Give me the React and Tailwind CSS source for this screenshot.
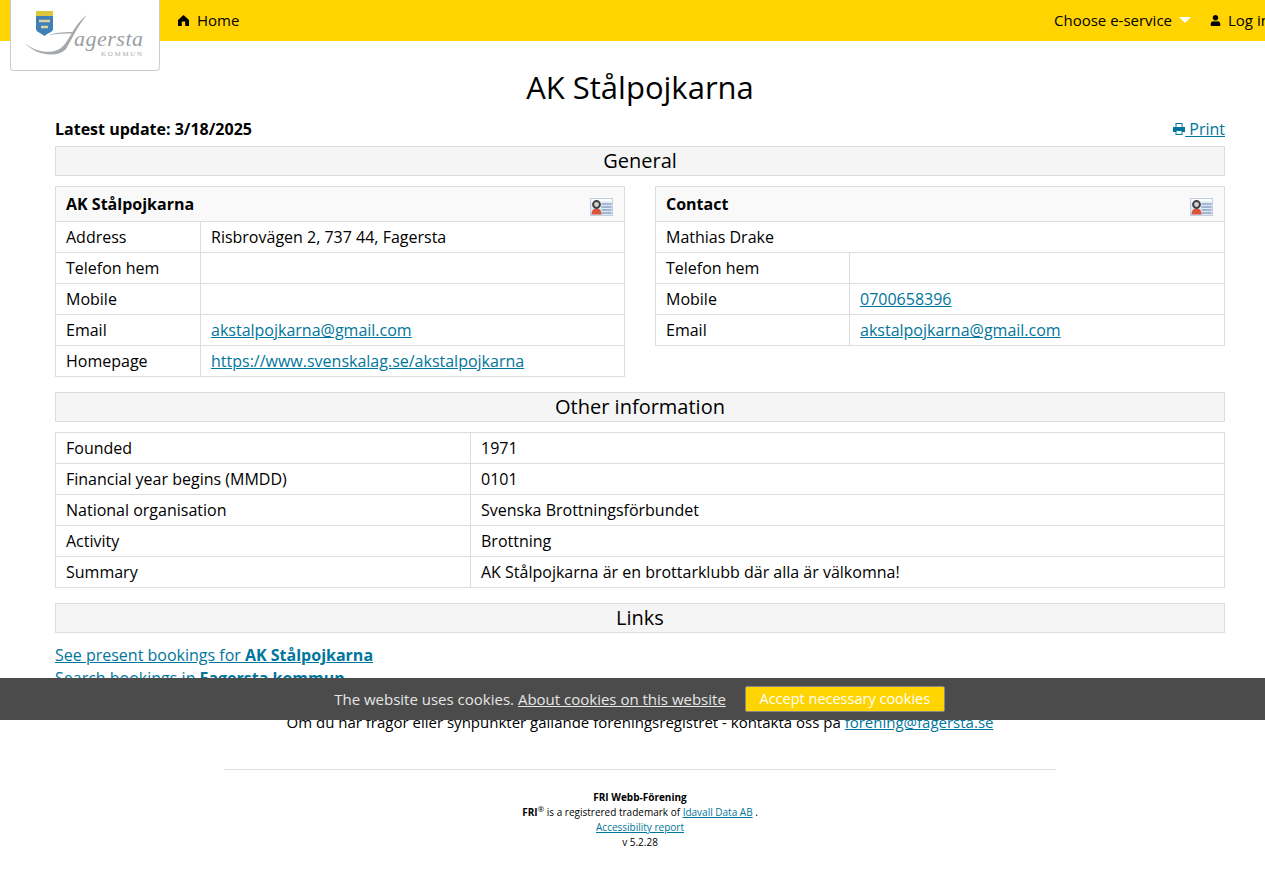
import React from "react";
import { FaUser } from "react-icons/fa";

const A = ({ children, className = "" }) => (
  <a href="#" className={"text-[#00769d] underline " + className}>{children}</a>
);

const CardIcon = () => (
  <svg width="23" height="18" viewBox="0 0 23 18" className="block">
    <rect x="0.5" y="0.5" width="22" height="17" fill="#dfe7f5" stroke="#c3cede" />
    <rect x="1" y="1" width="21" height="2.500" fill="#fbfcff" />
    <path d="M11.500 6h10M11.500 9h10M11.500 12h10M11.500 15h10" stroke="#8fa6c9" strokeWidth="1.500" />
    <path d="M1.500 16.500c0-4.500 2.500-6 5-6s5 1.500 5 6z" fill="#d9553a" />
    <circle cx="6.500" cy="6.500" r="3.400" fill="#d8d2ce" stroke="#3f3f3f" strokeWidth="2" />
  </svg>
);

const PrintIcon = () => (
  <svg width="12" height="12" viewBox="0 0 12 12" className="inline-block align-[0px]">
    <path fillRule="evenodd" d="M2.500 0H9.500V4H12V9H9.500V12H2.500V9H0V4H2.500zM3.500 1V4H8.500V1zM3.500 8V11H8.500V8z" fill="#00769d" />
  </svg>
);

const Section = ({ children }) => (
  <div className="h-[30px] border border-[#ddd] bg-[#f5f5f5] text-center text-[20px] leading-[28px]">{children}</div>
);

const Td = ({ children, className = "", ...p }) => (
  <td {...p} className={"h-[31px] border border-[#ddd] px-2.5 py-0 align-middle leading-[20px] " + className}>{children}</td>
);

const Head = ({ children }) => (
  <tr>
    <td colSpan={2} className="h-[35px] border border-[#ddd] bg-[#f9f9f9] pl-2.5 pr-[11px] align-middle">
      <div className="flex items-center justify-between font-bold">
        <span>{children}</span>
        <span className="mt-1.5"><CardIcon /></span>
      </div>
    </td>
  </tr>
);

export default function App() {
  return (
    <div className="relative h-[880px] w-full overflow-hidden bg-white text-[16px] text-black" style={{ fontFamily: '"Open Sans", sans-serif' }}>
      <nav className="flex h-[41px] w-[1285px] items-center justify-between bg-[#ffd400] pb-px pl-[178px] text-[15px]">
        <a href="#" className="flex items-center gap-2">
          <svg width="11" height="11" viewBox="0 0 11 11">
            <path d="M5.500 0 11 5V11H7.200V6.500H3.800V11H0V5z" fill="#000" />
          </svg>
          Home
        </a>
        <div className="flex items-center">
          <span>Choose e-service</span>
          <span className="ml-[7px] h-0 w-0 border-x-[6px] border-t-[6px] border-x-transparent border-t-white" />
          <FaUser className="ml-[19px] text-[11px]" />
          <span className="ml-[7px] w-[57px] whitespace-nowrap">Log in</span>
        </div>
      </nav>

      <div className="absolute left-[10px] top-0 h-[71px] w-[150px] rounded-b border border-t-0 border-[#ccc] bg-white">
        <svg width="148" height="70" viewBox="0 0 148 70" className="block">
          <path d="M25 11h17v5H25z" fill="#dcc63c" />
          <path d="M25 16h17v13c0 3-5 4-8.500 7-3.500-3-8.500-4-8.500-7z" fill="#3f80b8" />
          <path d="M28 21l11 0M30 27l7 0" stroke="#d9d3a0" strokeWidth="2.500" />
          <path d="M14 43c10 9 26 12 36 5 9-7 12-23 26-33-9 10-15 24-21 34-8 9-30 7-41-6z" fill="#a5a9ac" />
          <path d="M38 35c8-3 17-3 26-3l-1 1.500c-9 0-17 0-25 1.500z" fill="#a5a9ac" />
          <text x="63" y="46" fill="#9a9ea2" fontSize="22" fontStyle="italic" fontFamily="Liberation Serif, serif" textLength="69">agersta</text>
          <text x="90" y="56" fill="#a8acb0" fontSize="7" fontFamily="Liberation Serif, serif" textLength="41">KOMMUN</text>
        </svg>
      </div>

      <main className="pl-[55px] pr-[40px]">
        <h1 className="mt-[24px] h-[44px] text-center text-[31px] leading-[44px]">AK Stålpojkarna</h1>
        <div className="mt-[6px] flex h-[28px] items-center justify-between">
          <b>Latest update: 3/18/2025</b>
          <a href="#" className="whitespace-pre text-[#00769d] underline"><PrintIcon /> Print</a>
        </div>
        <div className="mt-[3px]"><Section>General</Section></div>

        <div className="mt-[10px] flex items-start gap-[30px]">
          <table className="w-[570px] table-fixed border-collapse">
            <colgroup><col className="w-[145px]" /><col /></colgroup>
            <tbody>
              <Head>AK Stålpojkarna</Head>
              <tr><Td>Address</Td><Td>Risbrovägen 2, 737 44, Fagersta</Td></tr>
              <tr><Td>Telefon hem</Td><Td /></tr>
              <tr><Td>Mobile</Td><Td /></tr>
              <tr><Td>Email</Td><Td><A>akstalpojkarna@gmail.com</A></Td></tr>
              <tr><Td>Homepage</Td><Td><A>https://www.svenskalag.se/akstalpojkarna</A></Td></tr>
            </tbody>
          </table>
          <table className="w-[570px] table-fixed border-collapse">
            <colgroup><col className="w-[194px]" /><col /></colgroup>
            <tbody>
              <Head>Contact</Head>
              <tr><Td colSpan={2}>Mathias Drake</Td></tr>
              <tr><Td>Telefon hem</Td><Td /></tr>
              <tr><Td>Mobile</Td><Td><A>0700658396</A></Td></tr>
              <tr><Td>Email</Td><Td><A>akstalpojkarna@gmail.com</A></Td></tr>
            </tbody>
          </table>
        </div>

        <div className="mt-[15px]"><Section>Other information</Section></div>
        <table className="mt-[10px] w-[1170px] table-fixed border-collapse">
          <colgroup><col className="w-[415px]" /><col /></colgroup>
          <tbody>
            <tr><Td>Founded</Td><Td>1971</Td></tr>
            <tr><Td>Financial year begins (MMDD)</Td><Td>0101</Td></tr>
            <tr><Td>National organisation</Td><Td>Svenska Brottningsförbundet</Td></tr>
            <tr><Td>Activity</Td><Td>Brottning</Td></tr>
            <tr><Td>Summary</Td><Td>AK Stålpojkarna är en brottarklubb där alla är välkomna!</Td></tr>
          </tbody>
        </table>

        <div className="mt-[15px]"><Section>Links</Section></div>
        <div className="mt-[11px] leading-[23px]">
          <div><A>See present bookings for <b>AK Stålpojkarna</b></A></div>
          <div><A>Search bookings in <b>Fagersta kommun</b></A></div>
        </div>
        <p className="mt-[21px] w-[1170px] text-center text-[15px] leading-[23px]">
          Om du har frågor eller synpunkter gällande föreningsregistret - kontakta oss på <A>forening@fagersta.se</A>
        </p>
        <hr className="mx-auto mt-[35px] w-[832px] border-[#ddd]" />
        <div className="mt-[20px] w-[1170px] text-center text-[10px] leading-[15px]">
          <div className="font-bold">FRI Webb-Förening</div>
          <div><b>FRI</b><sup className="text-[8px]">®</sup> is a registrered trademark of <A>Idavall Data AB</A> .</div>
          <div><A>Accessibility report</A></div>
          <div>v 5.2.28</div>
        </div>
      </main>

      <div className="absolute left-0 top-[678px] flex h-[42px] w-full items-center justify-center bg-[#4b4b4b] pl-[14px] text-[15px] text-[#e6e6e6]">
        <span>The website uses cookies. <a href="#" className="underline">About cookies on this website</a></span>
        <button className="ml-[19px] h-[26px] w-[200px] rounded-[2px] border border-[#888] bg-[#ffd400] text-[14.5px] leading-[22px] text-white">Accept necessary cookies</button>
      </div>
    </div>
  );
}
